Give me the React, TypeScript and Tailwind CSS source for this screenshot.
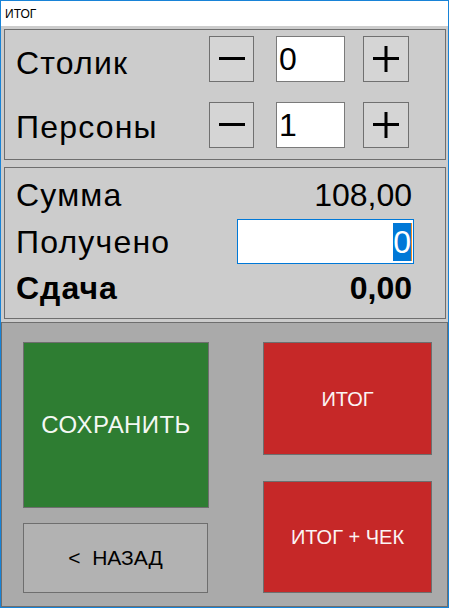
import { useState } from 'react';

function MinusIcon() {
  return (
    <svg width="26" height="26" viewBox="0 0 26 26">
      <rect x="0" y="11" width="26" height="3" fill="#000" />
    </svg>
  );
}

function PlusIcon() {
  return (
    <svg width="26" height="26" viewBox="0 0 26 26">
      <rect x="0" y="11" width="26" height="3" fill="#000" />
      <rect x="11.5" y="0" width="3" height="26" fill="#000" />
    </svg>
  );
}

function Stepper({ label, value, onChange, labelOffset }: { label: string; value: number; onChange: (v: number) => void; labelOffset: string }) {
  return (
    <div className="flex h-[46px] items-center">
      <span className={`w-[204px] pl-[11px] text-[32px] leading-none tracking-[1.2px] ${labelOffset}`}>{label}</span>
      <button
        onClick={() => onChange(Math.max(0, value - 1))}
        className="flex h-[46px] w-[45px] items-center justify-center border border-[#707070] bg-[#d5d5d5]"
      >
        <MinusIcon />
      </button>
      <div className="ml-[22px] flex h-[46px] w-[69px] items-center border border-[#7a7a7a] bg-white pl-[2px] text-[32px] leading-none">
        {value}
      </div>
      <button
        onClick={() => onChange(value + 1)}
        className="ml-[18px] flex h-[46px] w-[46px] items-center justify-center border border-[#707070] bg-[#d5d5d5]"
      >
        <PlusIcon />
      </button>
    </div>
  );
}

export default function App() {
  const [table, setTable] = useState(0);
  const [persons, setPersons] = useState(1);

  return (
    <div className="flex h-[608px] w-[449px] flex-col border border-[#1883d7] bg-[#cccccc] font-['Liberation_Sans',Arial,sans-serif] text-black">
      {/* title bar */}
      <div className="flex h-[25px] items-center bg-white pl-[4px] text-[12px]">ИТОГ</div>

      <div className="ml-[3px] mr-[2px] mt-[3px] flex h-[131px] flex-col gap-[20px] border border-[#6e6e6e] pt-[6px]">
        <Stepper label="Столик" value={table} onChange={setTable} labelOffset="mt-[7px]" />
        <Stepper label="Персоны" value={persons} onChange={setPersons} labelOffset="mt-[3px]" />
      </div>

      <div className="ml-[3px] mr-[2px] mt-[7px] flex h-[152px] flex-col gap-px border border-[#6e6e6e] pt-[4px] text-[32px] leading-none">
        <div className="flex h-[46px] items-center">
          <span className="flex-1 pl-[11px] tracking-[1.2px]">Сумма</span>
          <span className="mr-[31px] w-[177px] pr-[2px] text-right">108,00</span>
        </div>
        <div className="flex h-[45px] items-center">
          <span className="flex-1 pl-[11px] tracking-[1.2px]">Получено</span>
          <div className="mr-[31px] flex h-[45px] w-[177px] items-center justify-end border border-[#0078d7] bg-white pr-px">
            <span className="bg-[#0078d7] leading-[38px] text-white">0</span>
            <span className="h-[38px] w-px bg-[#f08a24]" />
          </div>
        </div>
        <div className="flex h-[46px] items-center font-bold">
          <span className="flex-1 pl-[11px] tracking-[1px]">Сдача</span>
          <span className="mr-[31px] w-[177px] pr-[2px] text-right">0,00</span>
        </div>
      </div>

      <div className="mt-[3px] flex h-[285px] gap-[54px] border border-[#6e6e6e] bg-[#aaaaaa] pl-[21px] pt-[19px] text-[20px]">
        <div className="flex w-[186px] flex-col gap-[15px]">
          <button className="flex h-[166px] w-[186px] items-center justify-center border border-[#6e6e6e] bg-[#2e7d32] text-[24px] tracking-[0.4px] text-[#f4f8f4]">
            СОХРАНИТЬ
          </button>
          <button className="flex h-[70px] w-[185px] items-center justify-center whitespace-pre border border-[#6e6e6e] bg-[#b2b2b2] text-[21px]">
            {'<  НАЗАД'}
          </button>
        </div>
        <div className="flex w-[169px] flex-col gap-[26px]">
          <button className="flex h-[113px] items-center justify-center border border-[#6e6e6e] bg-[#c62828] text-[#fbf4f4]">
            ИТОГ
          </button>
          <button className="flex h-[112px] items-center justify-center border border-[#6e6e6e] bg-[#c62828] text-[#fbf4f4]">
            ИТОГ + ЧЕК
          </button>
        </div>
      </div>
    </div>
  );
}
